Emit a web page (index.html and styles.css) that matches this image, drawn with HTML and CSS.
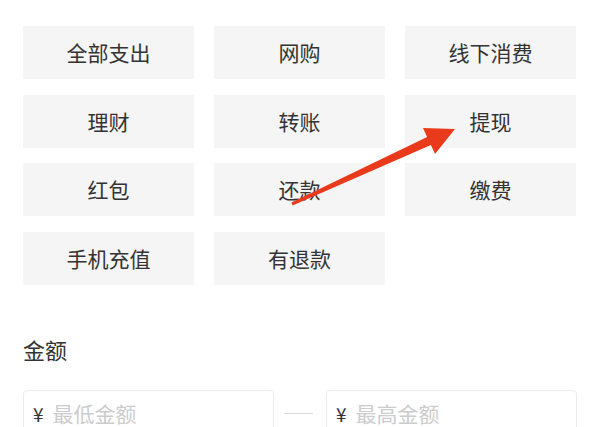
FILE: index.html
```html
<!DOCTYPE html>
<html lang="zh-CN">
<head>
<meta charset="utf-8">
<link rel="stylesheet" href="styles.css">
</head>
<body>
<div class="page">
  <div class="tags">
    <div class="tag">全部支出</div>
    <div class="tag">网购</div>
    <div class="tag">线下消费</div>
    <div class="tag">理财</div>
    <div class="tag">转账</div>
    <div class="tag">提现</div>
    <div class="tag">红包</div>
    <div class="tag">还款</div>
    <div class="tag">缴费</div>
    <div class="tag">手机充值</div>
    <div class="tag">有退款</div>
  </div>
  <div class="label">金额</div>
  <div class="range">
    <div class="field"><span class="cur">¥</span><span class="ph">最低金额</span></div>
    <div class="dash"></div>
    <div class="field"><span class="cur">¥</span><span class="ph">最高金额</span></div>
  </div>
  <svg class="arrow" width="600" height="427" viewBox="0 0 600 427">
    <polygon points="291.4,202.6 427.1,136.9 423,128 455,129 435,154 430.9,145.1 292.6,205.4" fill="#ea3a1c"/>
  </svg>
</div>
</body>
</html>
```

FILE: styles.css
```css
html, body {
  margin: 0;
  padding: 0;
  background: #ffffff;
}
.page {
  position: relative;
  width: 600px;
  height: 427px;
  overflow: hidden;
  font-family: "Noto Sans CJK SC", "Noto Sans", sans-serif;
  color: #333333;
}
.tags {
  display: grid;
  grid-template-columns: repeat(3, 171px);
  grid-auto-rows: 53px;
  column-gap: 20px;
  row-gap: 15.5px;
  padding: 26px 0 0 23px;
}
.tag {
  background: #f5f5f5;
  display: flex;
  align-items: center;
  justify-content: center;
  font-size: 21px;
  line-height: 1;
  color: #333333;
}
.label {
  margin: 52px 0 0 23px;
  font-size: 22px;
  line-height: 24px;
  color: #333333;
}
.range {
  display: flex;
  align-items: flex-start;
  margin: 29px 0 0 23px;
}
.field {
  box-sizing: border-box;
  width: 251px;
  height: 48px;
  border: 1px solid #ececec;
  border-radius: 4px;
  display: flex;
  align-items: flex-start;
  padding: 12px 0 0 9px;
}
.cur {
  font-size: 19px;
  line-height: 21px;
  color: #333333;
  margin-right: 9px;
}
.ph {
  font-size: 21px;
  line-height: 21px;
  color: #cccccc;
}
.dash {
  width: 29px;
  height: 1px;
  background: #dddddd;
  margin: 23px 13px 0 10px;
}
.arrow {
  position: absolute;
  left: 0;
  top: 0;
}
```
